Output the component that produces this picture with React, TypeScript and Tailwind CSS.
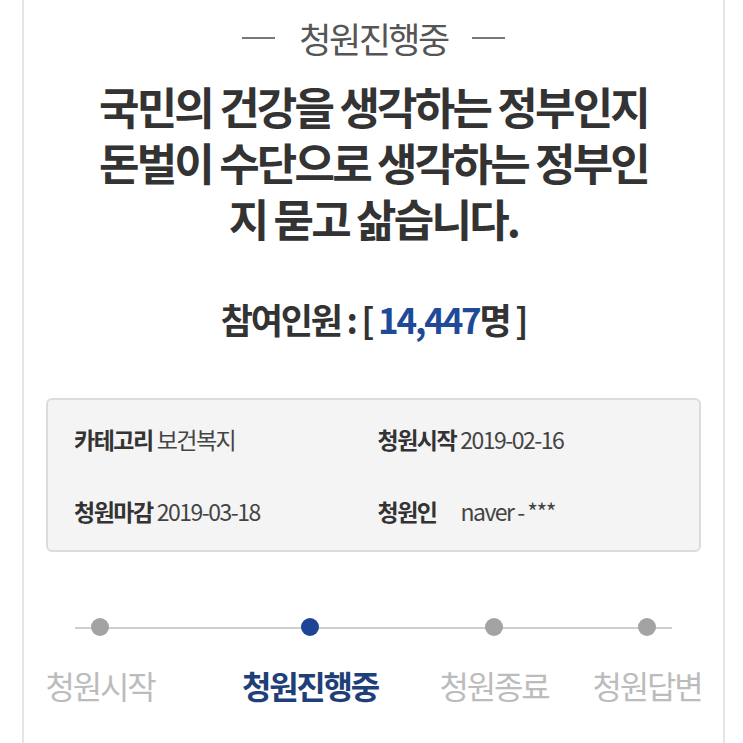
const font = "font-['Noto_Sans_CJK_KR','Noto_Sans',sans-serif]";

const steps = [
  { label: "청원시작", active: false, ml: "ml-[6px]" },
  { label: "청원진행중", active: true, ml: "ml-[70px]" },
  { label: "청원종료", active: false, ml: "ml-[44px]" },
  { label: "청원답변", active: false, ml: "ml-[13px]" },
];

const titleLines = ["국민의 건강을 생각하는 정부인지", "돈벌이 수단으로 생각하는 정부인", "지 묻고 삶습니다."];

function InfoItem({ label, value, gap = "gap-1" }: { label: string; value: string; gap?: string }) {
  return (
    <div className={`flex items-baseline ${gap} tracking-[-1.5px]`}>
      <span className="font-bold text-[#333]">{label}</span>
      <span className="text-[#444]">{value}</span>
    </div>
  );
}

export default function App() {
  return (
    <div className={`${font} w-[743px] h-[743px] overflow-hidden bg-white`}>
      <div className="ml-[22px] w-[703px] h-full border-x-2 border-[#e6e6e6] flex flex-col">
        {/* status heading */}
        <div className="flex items-center justify-center gap-6 pt-[12px] text-[35px] text-[#555] tracking-[-2.5px]">
          <span className="w-[33px] h-[2px] bg-[#777]" />
          <span className="leading-[52px]">청원진행중</span>
          <span className="w-[33px] h-[2px] bg-[#777]" />
        </div>

        <h1 className="mt-[14px] px-[40px] flex flex-col items-center text-[44px] font-bold text-[#333] tracking-[-2.8px]">
          {titleLines.map((line) => (
            <span key={line} className="h-[56px] leading-[56px] whitespace-nowrap">
              {line}
            </span>
          ))}
        </h1>

        <p className="mt-[51px] text-center text-[35px] font-bold text-[#333] tracking-[-2.2px] leading-[44px]">
          참여인원 : [ <span className="text-[#1f4a98]">14,447</span>명 ]
        </p>

        {/* petition info box */}
        <div className="mt-[57px] mx-[22px] h-[154px] rounded-md border-2 border-[#dcdcdc] bg-[#f4f4f4] px-[26px] py-[22px] grid grid-cols-2 grid-rows-2 text-[23px]">
          <InfoItem label="카테고리" value="보건복지" />
          <div className="pl-[4px]">
            <InfoItem label="청원시작" value="2019-02-16" />
          </div>
          <div className="self-end">
            <InfoItem label="청원마감" value="2019-03-18" />
          </div>
          <div className="pl-[4px] self-end">
            <InfoItem label="청원인" value="naver - ***" gap="gap-6" />
          </div>
        </div>

        {/* progress steps */}
        <div className="relative mt-[66px]">
          <div className="absolute top-[9px] left-[51px] w-[597px] h-[2px] bg-[#cfcfcf]" />
          <div className="relative flex">
            {steps.map((s) => (
              <div key={s.label} className={`${s.ml} w-[140px] flex flex-col items-center`}>
                <span
                  className={`w-[18px] h-[18px] rounded-full ${s.active ? "bg-[#1e4595]" : "bg-[#a3a3a3]"}`}
                />
                <span
                  className={`mt-[29px] whitespace-nowrap text-[32px] tracking-[-2.2px] leading-[40px] ${
                    s.active ? "font-bold text-[#1e3f78]" : "text-[#bcbcbc]"
                  }`}
                >
                  {s.label}
                </span>
              </div>
            ))}
          </div>
        </div>
      </div>
    </div>
  );
}
